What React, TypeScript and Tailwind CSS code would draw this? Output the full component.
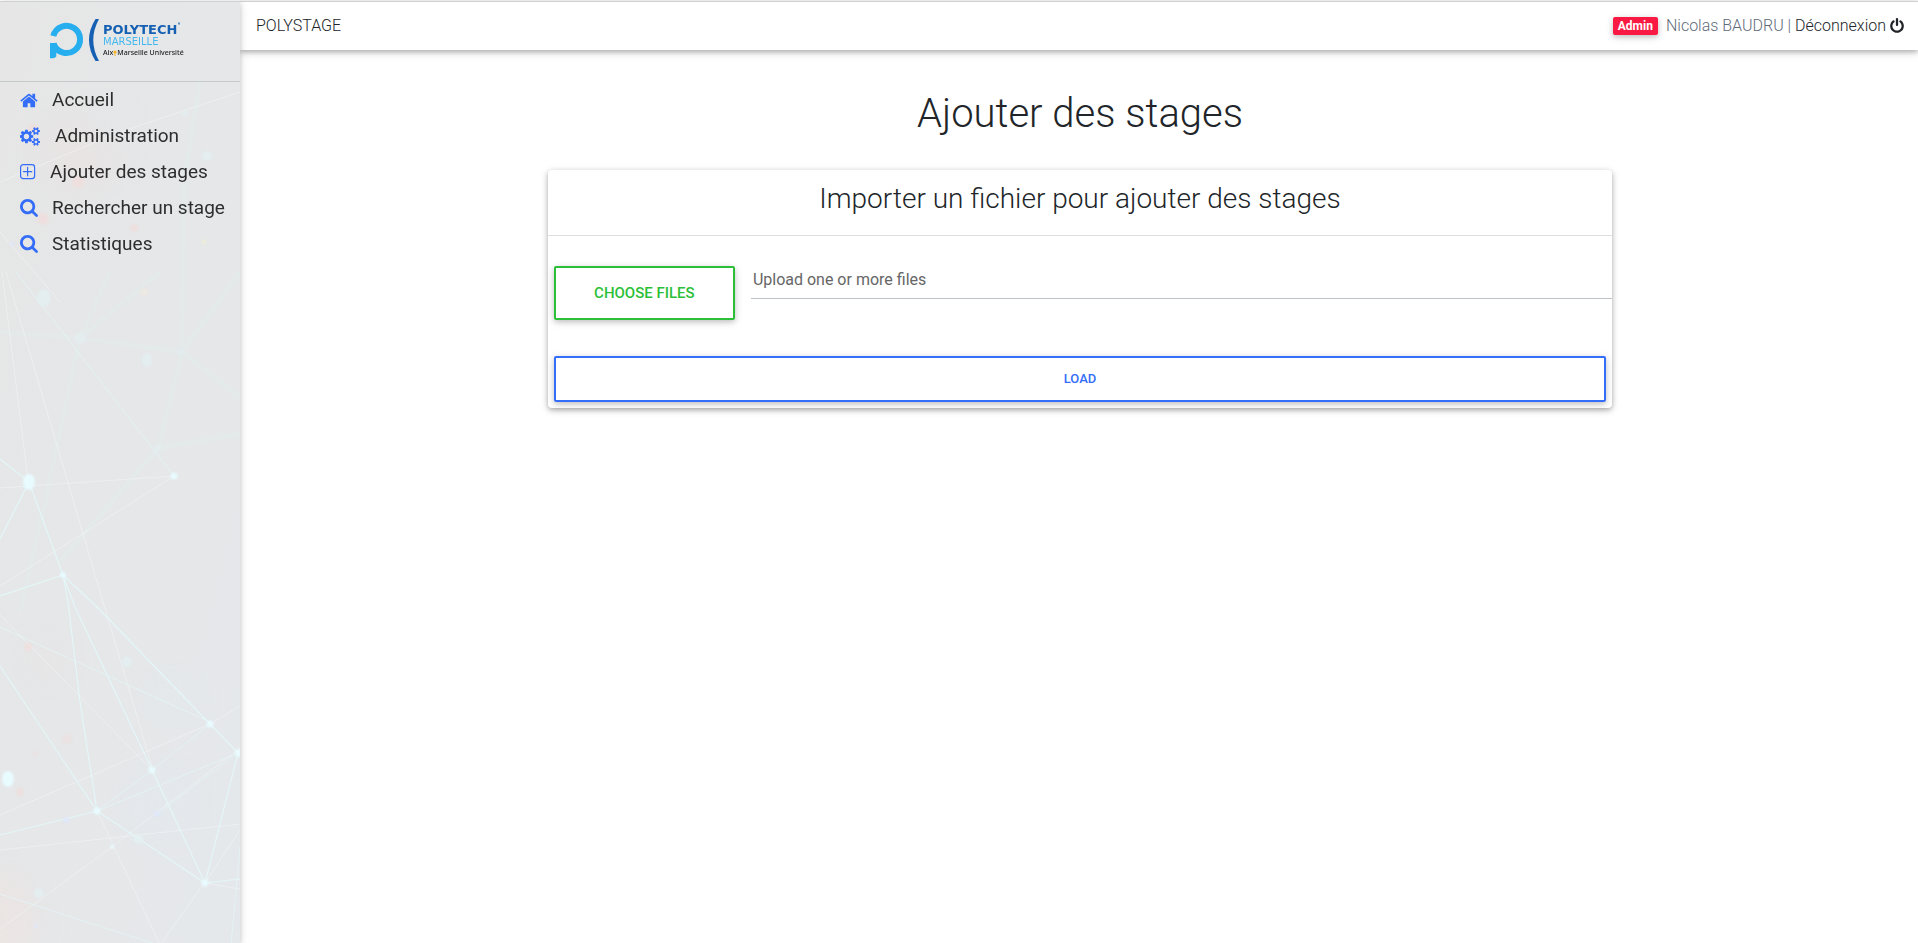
import type { ReactNode } from "react";

const HOME =
  "M1472 992v480q0 26-19 45t-45 19h-384v-384h-256v384h-384q-26 0-45-19t-19-45v-480q0-1 .5-3t.5-3l575-474 575 474q1 2 1 6zm223-69l-62 74q-8 9-21 11h-3q-13 0-21-7l-692-577-692 577q-12 8-24 7-13-2-21-11l-62-74q-8-10-7-23.5t11-21.5l719-599q32-26 76-26t76 26l244 204v-195q0-14 9-23t23-9h192q14 0 23 9t9 23v408l219 182q10 8 11 21.5t-7 23.5z";
const SEARCH =
  "M1216 832q0-185-131.5-316.5t-316.5-131.5-316.5 131.5-131.5 316.5 131.5 316.5 316.5 131.5 316.5-131.5 131.5-316.5zm512 832q0 52-38 90t-90 38q-54 0-90-38l-343-342q-179 124-399 124-143 0-273.5-55.5t-225-150-150-225-55.5-273.5 55.5-273.5 150-225 225-150 273.5-55.5 273.5 55.5 225 150 150 225 55.5 273.5q0 220-124 399l343 343q37 37 37 90z";
const POWER =
  "M1664 896q0 156-61 298t-164 245-245 164-298 61-298-61-245-164-164-245-61-298q0-182 80.5-343t226.5-270q43-32 95.5-25t83.5 50q32 42 24.5 94.5t-49.5 84.5q-98 74-151.5 181t-53.5 228q0 104 40.5 198.5t109.5 163.5 163.5 109.5 198.5 40.5 198.5-40.5 163.5-109.5 109.5-163.5 40.5-198.5q0-121-53.5-228t-151.5-181q-42-32-49.5-84.5t24.5-94.5q31-43 84-50t95 25q146 109 226.5 270t80.5 343zm-640-768v640q0 52-38 90t-90 38-90-38-38-90v-640q0-52 38-90t90-38 90 38 38 90z";
const COGS =
  "M832 896q0-106-75-181t-181-75-181 75-75 181 75 181 181 75 181-75 75-181zm768 512q0-52-38-90t-90-38-90 38-38 90q0 53 37.5 90.5t90.5 37.5 90.5-37.5 37.5-90.5zm0-1024q0-52-38-90t-90-38-90 38-38 90q0 53 37.5 90.5t90.5 37.5 90.5-37.5 37.5-90.5zm-384 421v185q0 10-7 19.5t-16 10.5l-155 24q-11 35-32 76 34 48 90 115 7 11 7 20 0 12-7 19-23 30-82.5 89.5t-78.5 59.5q-11 0-21-7l-115-90q-37 19-77 31-11 108-23 155-7 24-30 24h-186q-11 0-20-7.5t-10-17.5l-23-153q-34-10-75-31l-118 89q-7 7-20 7-11 0-21-8-144-133-144-160 0-9 7-19 10-14 41-53t47-61q-23-44-35-82l-152-24q-10-1-17-9.5t-7-19.5v-185q0-10 7-19.5t16-10.5l155-24q11-35 32-76-34-48-90-115-7-11-7-20 0-12 7-20 22-30 82-89t79-59q11 0 21 7l115 90q34-18 77-32 11-108 23-154 7-24 30-24h186q11 0 20 7.5t10 17.5l23 153q34 10 75 31l118-89q8-7 20-7 11 0 21 8 144 133 144 160 0 8-7 19-12 16-42 54t-45 60q23 48 34 82l152 23q10 2 17 10.5t7 19.5zm640 533v140q0 16-149 31-12 27-30 52 51 113 51 138 0 4-4 7-122 71-124 71-8 0-46-47t-52-68q-20 2-30 2t-30-2q-14 21-52 68t-46 47q-2 0-124-71-4-3-4-7 0-25 51-138-18-25-30-52-149-15-149-31v-140q0-16 149-31 13-29 30-52-51-113-51-138 0-4 4-7 4-2 35-20t59-34 30-16q8 0 46 46.5t52 67.5q20-2 30-2t30 2q51-71 92-112l6-2q4 0 124 70 4 3 4 7 0 25-51 138 17 23 30 52 149 15 149 31zm0-1024v140q0 16-149 31-12 27-30 52 51 113 51 138 0 4-4 7-122 71-124 71-8 0-46-47t-52-68q-20 2-30 2t-30-2q-14 21-52 68t-46 47q-2 0-124-71-4-3-4-7 0-25 51-138-18-25-30-52-149-15-149-31v-140q0-16 149-31 13-29 30-52-51-113-51-138 0-4 4-7 4-2 35-20t59-34 30-16q8 0 46 46.5t52 67.5q20-2 30-2t30 2q51-71 92-112l6-2q4 0 124 70 4 3 4 7 0 25-51 138 17 23 30 52 149 15 149 31z";

const navItems: { label: string; icon: ReactNode }[] = [
  {
    label: "Accueil",
    icon: (
      <svg viewBox="64 0 1664 1792" className="h-[19px] w-[18px]" fill="currentColor" aria-hidden="true">
        <path d={HOME} />
      </svg>
    ),
  },
  {
    label: "Administration",
    icon: (
      <svg viewBox="0 0 1920 1792" className="h-[19px] w-[21px]" fill="currentColor" aria-hidden="true">
        <path d={COGS} />
      </svg>
    ),
  },
  {
    label: "Ajouter des stages",
    icon: (
      <svg viewBox="0 0 16 16" className="size-4" fill="none" stroke="currentColor" strokeWidth="1.2" aria-hidden="true">
        <rect x="0.6" y="0.6" width="14" height="14" rx="2.6" />
        <path d="M7.6 3.4v8.4M3.4 7.6h8.4" strokeLinecap="round" />
      </svg>
    ),
  },
  {
    label: "Rechercher un stage",
    icon: (
      <svg viewBox="64 128 1664 1664" className="size-[18px]" fill="currentColor" aria-hidden="true">
        <path d={SEARCH} />
      </svg>
    ),
  },
  {
    label: "Statistiques",
    icon: (
      <svg viewBox="64 128 1664 1664" className="size-[18px]" fill="currentColor" aria-hidden="true">
        <path d={SEARCH} />
      </svg>
    ),
  },
];

function NetworkBackdrop() {
  return (
    <svg
      className="absolute inset-0 size-full"
      viewBox="0 0 240 943"
      preserveAspectRatio="xMinYMin slice"
      aria-hidden="true"
    >
      <defs>
        <filter id="soft" x="-100%" y="-100%" width="300%" height="300%">
          <feGaussianBlur stdDeviation="1.2" />
        </filter>
        <filter id="haze" x="-100%" y="-100%" width="300%" height="300%">
          <feGaussianBlur stdDeviation="14" />
        </filter>
        <linearGradient id="base" x1="0" y1="0" x2="1" y2="1">
          <stop offset="0" stopColor="#e6e6e6" />
          <stop offset="1" stopColor="#e5e8eb" />
        </linearGradient>
      </defs>
      <rect width="240" height="943" fill="url(#base)" />
      <g filter="url(#haze)" opacity="0.6">
        <ellipse cx="80" cy="150" rx="36" ry="34" fill="#ecdfdf" opacity="0.7" />
        <ellipse cx="2" cy="920" rx="34" ry="50" fill="#efe3e0" opacity="0.9" />
        <ellipse cx="50" cy="660" rx="20" ry="18" fill="#ece4e2" opacity="0.6" />
        <ellipse cx="160" cy="800" rx="34" ry="34" fill="#e2ebf3" opacity="0.6" />
        <ellipse cx="170" cy="695" rx="22" ry="18" fill="#e1eef0" opacity="0.6" />
        <ellipse cx="110" cy="120" rx="20" ry="18" fill="#e1ebed" opacity="0.6" />
      </g>
      <g stroke="#e0edf0" strokeWidth="5" fill="none" opacity="0.3">
        <path d="M0 330L80 336L182 350L240 395M80 336L45 500L20 610M182 350L240 270M182 350L158 446L60 560M80 336L160 270M80 336L110 270M158 446L240 432M182 350L184 180L200 80" />
      </g>
      <g stroke="#f1f5f6" strokeWidth="1" fill="none" opacity="0.6">
        <path d="M2 270L28 478M6 270L106 610L152 765M0 486L174 474L0 584M0 180L120 130L240 90M0 230L60 300M0 613L152 768M97 809L160 943L205 880M0 927L112 845L240 746M0 813L210 722L240 704M0 848L240 822M205 881L240 887M205 881L240 828" />
      </g>
      <g stroke="#e3f9fb" strokeWidth="1" fill="none" opacity="0.85">
        <path d="M16 270L174 474M0 625L210 720M97 809L152 768L210 722M97 809L238 751L157 812M0 892L158 943M231 943L240 845" opacity="0.7" />
        <path d="M0 457L29 480L63 573L0 594M29 480L0 537M63 573L100 608L210 722L238 751L205 881L240 877M63 573L75 605L152 768L205 881L97 809L80 700L68 600L63 573M97 809L0 833M97 809L0 664" strokeWidth="1.2" />
      </g>
      <g filter="url(#soft)">
        <g fill="#e8fbff">
          <ellipse cx="29" cy="480" rx="6" ry="8" />
          <ellipse cx="8" cy="777" rx="6" ry="8" />
          <circle cx="174" cy="474" r="3.5" />
          <circle cx="63" cy="573" r="3" />
          <circle cx="210" cy="722" r="3.5" />
          <circle cx="152" cy="768" r="3.5" />
          <circle cx="97" cy="809" r="3.5" />
          <circle cx="205" cy="881" r="3.5" />
          <circle cx="239" cy="751" r="4" />
          <circle cx="112" cy="845" r="2" />
        </g>
        <g fill="#e3f1f3" opacity="0.75">
          <ellipse cx="147" cy="358" rx="5" ry="7" />
          <ellipse cx="44" cy="296" rx="7" ry="9" />
          <circle cx="80" cy="336" r="6" opacity="0.6" />
          <circle cx="181" cy="350" r="4" opacity="0.5" />
          <circle cx="158" cy="446" r="4" opacity="0.6" />
          <circle cx="127" cy="660" r="5" />
          <circle cx="138" cy="837" r="5" />
          <circle cx="39" cy="891" r="5" />
          <circle cx="207" cy="154" r="5" />
          <circle cx="185" cy="111" r="3" />
        </g>
        <g fill="#e0e7fa">
          <circle cx="157" cy="812" r="3" />
          <circle cx="66" cy="818" r="3" />
          <circle cx="12" cy="242" r="2" />
          <circle cx="36" cy="924" r="2" />
        </g>
        <g fill="#f1dedd" opacity="0.8">
          <circle cx="43" cy="217" r="6" />
          <circle cx="134" cy="226" r="4" />
          <circle cx="78" cy="180" r="6" />
          <circle cx="33" cy="127" r="5" />
          <circle cx="28" cy="645" r="4" />
          <circle cx="67" cy="737" r="5" opacity="0.6" />
          <circle cx="20" cy="790" r="4" />
          <circle cx="35" cy="752" r="3" opacity="0.5" />
        </g>
        <circle cx="144" cy="290" r="4" fill="#ece8e2" />
        <circle cx="204" cy="240" r="2" fill="#f2f0d2" />
      </g>
    </svg>
  );
}

function Logo() {
  return (
    <a href="#accueil" aria-label="Polytech Marseille" className="flex h-[42px] items-start gap-[3px]">
      <svg viewBox="0 0 50 42" className="h-[42px] w-[50px]" fill="none" aria-hidden="true">
        <path d="M3.300 17A13.600 13.600 0 1 1 3.500 24.500" stroke="#27aeef" strokeWidth="6" />
        <path d="M0 24H6.300L10 33L6.300 34V37.500Q5 39.500 2 39.200H0Z" fill="#27aeef" />
        <path d="M45.500 0H49Q37.500 21 49 42H45.500Q32.500 21 45.500 0Z" fill="#1560b3" />
      </svg>
      <span className="flex flex-col pt-[3px] whitespace-nowrap">
        <span className="flex font-['DejaVu_Sans',sans-serif] text-[13px] leading-[15px] font-bold text-[#1560b3]">
          POLYTECH<span className="text-[6px] leading-[6px]">°</span>
        </span>
        <span className="font-['DejaVu_Sans',sans-serif] text-[10px] leading-[10px] text-[#45b8f0]">MARSEILLE</span>
        <span className="flex items-center font-['Noto_Sans',sans-serif] text-[7px] leading-[12px] font-medium text-[#1d1d1f]">
          Aix
          <svg viewBox="0 0 4 6" className="h-[6px] w-1" fill="#f5b321" aria-hidden="true">
            <path d="M2 0L4 2.500L2.500 3.500V6H1.500V3.500L0 2.500Z" />
          </svg>
          Marseille Université
        </span>
      </span>
    </a>
  );
}

export default function App() {
  return (
    <div className="flex min-h-screen bg-white pt-px font-['Roboto',sans-serif] text-[#212529]">
      <aside className="relative z-20 w-60 shrink-0 border-t border-[#cfd2d2] shadow-[0_2px_5px_rgba(0,0,0,0.16),0_2px_10px_rgba(0,0,0,0.12)]">
        <NetworkBackdrop />
        <div className="relative flex h-20 border-b border-[#c6c9cb] pt-[17px] pl-[50px]">
          <Logo />
        </div>
        <nav className="relative" aria-label="Navigation principale">
          <ul>
            {navItems.map((item) => (
              <li key={item.label}>
                <a href="#" className="flex h-9 items-center gap-[14px] pl-5 text-[19px] whitespace-nowrap text-[#2e2e2e]">
                  <span className="text-[#346df7]">{item.icon}</span>
                  {item.label}
                </a>
              </li>
            ))}
          </ul>
        </nav>
      </aside>

      <div className="flex min-w-0 grow flex-col">
        <header className="flex h-[49px] items-center justify-between border-t border-[#cfd2d2] pr-[14px] pl-4 font-light shadow-[0_2px_5px_rgba(0,0,0,0.26),0_2px_10px_rgba(0,0,0,0.12)]">
          <span>POLYSTAGE</span>
          <div className="flex items-center">
            <span className="mr-2 rounded-xs bg-[#f91942] px-[5px] text-xs leading-[18px] font-bold text-white shadow-[0_2px_5px_rgba(0,0,0,0.16),0_2px_10px_rgba(0,0,0,0.12)]">
              Admin
            </span>
            <span className="whitespace-pre text-[#5f6b7a]">Nicolas BAUDRU | </span>
            <a href="#deconnexion" className="flex items-center gap-1 text-[#212529]">
              Déconnexion
              <svg viewBox="128 0 1536 1792" className="h-4 w-[14px]" fill="currentColor" aria-hidden="true">
                <path d={POWER} />
              </svg>
            </a>
          </div>
        </header>

        <main className="pl-0.5">
          <h1 className="pt-10 text-center text-[40px] leading-[48px] font-light">Ajouter des stages</h1>
          <section className="mx-auto mt-8 w-[63.5%] rounded-sm bg-white shadow-[0_2px_5px_rgba(0,0,0,0.26),0_2px_10px_rgba(0,0,0,0.12)]">
            <h2 className="border-b border-[#dedede] pt-3 pb-5 text-center text-[28px] leading-[33px] font-light">
              Importer un fichier pour ajouter des stages
            </h2>
            <form className="pt-[30px] pb-[6px] pl-[6px]" onSubmit={(e) => e.preventDefault()}>
              <div className="flex items-start gap-4">
                <button
                  type="button"
                  className="h-[54px] w-[181px] shrink-0 rounded-xs border-2 border-[#2bbf38] text-[15px] font-medium text-[#2bbf38] shadow-[0_2px_5px_rgba(0,0,0,0.16),0_2px_10px_rgba(0,0,0,0.12)]"
                >
                  CHOOSE FILES
                </button>
                <input
                  type="text"
                  readOnly
                  aria-label="Upload one or more files"
                  placeholder="Upload one or more files"
                  className="h-[33px] min-w-0 grow border-b border-[#bdc1c8] pb-[6px] pl-0.5 text-base outline-none placeholder:text-[#666666]"
                />
              </div>
              <div className="pt-9 pr-[6px]">
                <button
                  type="submit"
                  className="h-[46px] w-full rounded-xs border-2 border-[#346df7] text-[13px] font-medium text-[#346df7] shadow-[0_2px_5px_rgba(0,0,0,0.16),0_2px_10px_rgba(0,0,0,0.12)]"
                >
                  LOAD
                </button>
              </div>
            </form>
          </section>
        </main>
      </div>
    </div>
  );
}
